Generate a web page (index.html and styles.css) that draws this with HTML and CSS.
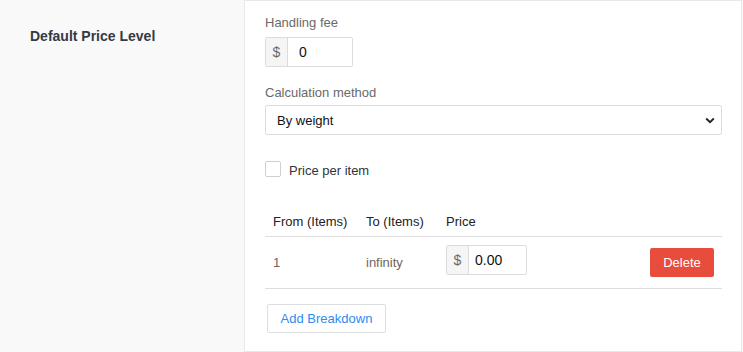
FILE: index.html
```html
<!DOCTYPE html>
<html>
<head>
<meta charset="utf-8">
<link rel="stylesheet" href="styles.css">
</head>
<body>
<div class="layout">
  <div class="side">
    <div class="side-title">Default Price Level</div>
  </div>
  <div class="panel">
    <div class="field">
      <div class="label">Handling fee</div>
      <div class="input-group fee">
        <span class="addon">$</span>
        <span class="value">0</span>
      </div>
    </div>
    <div class="field calc">
      <div class="label">Calculation method</div>
      <div class="select">
        <span>By weight</span>
        <svg class="chev" width="10" height="7" viewBox="0 0 10 7"><path d="M1.2 1.5 L5 5.2 L8.8 1.5" fill="none" stroke="#222" stroke-width="1.8"/></svg>
      </div>
    </div>
    <div class="check-row">
      <span class="checkbox"></span>
      <span class="check-label">Price per item</span>
    </div>
    <table class="tbl">
      <thead>
        <tr>
          <th class="c1">From (Items)</th>
          <th class="c2">To (Items)</th>
          <th class="c3">Price</th>
          <th class="c4"></th>
        </tr>
      </thead>
      <tbody>
        <tr>
          <td class="c1 muted">1</td>
          <td class="c2 muted">infinity</td>
          <td class="c3">
            <div class="input-group price">
              <span class="addon">$</span>
              <span class="value">0.00</span>
            </div>
          </td>
          <td class="c4"><button class="btn-delete">Delete</button></td>
        </tr>
      </tbody>
    </table>
    <button class="btn-add">Add Breakdown</button>
  </div>
</div>
</body>
</html>
```
FILE: styles.css
```css
html, body {
  margin: 0;
  padding: 0;
}
body {
  background: #f9f9f9;
  font-family: "Liberation Sans", Arial, sans-serif;
  font-size: 13px;
  color: #333;
  width: 743px;
  height: 352px;
  overflow: hidden;
}
.layout {
  display: flex;
  height: 352px;
}
.side {
  width: 244px;
  flex: none;
  box-sizing: border-box;
  padding: 27px 0 0 30px;
}
.side-title {
  font-size: 14px;
  font-weight: bold;
  line-height: 18px;
  color: #333a45;
}
.panel {
  width: 498px;
  flex: none;
  box-sizing: border-box;
  height: 352px;
  background: #fff;
  border: 1px solid #e8e8e8;
  padding: 13px 19px 0 20px;
}
.label {
  line-height: 18px;
  color: #6a6a6a;
  margin-bottom: 5px;
}
.calc {
  margin-top: 17px;
}
.calc .label {
  margin-bottom: 3px;
}
.input-group {
  display: flex;
  height: 30px;
  box-sizing: border-box;
  border: 1px solid #dcdcdc;
  border-radius: 2px;
  align-items: stretch;
}
.addon {
  width: 21px;
  flex: none;
  background: #f5f5f5;
  border-right: 1px solid #dcdcdc;
  color: #6a6a6a;
  display: flex;
  align-items: center;
  justify-content: center;
  font-size: 14px;
}
.value {
  display: flex;
  align-items: center;
  color: #111;
  font-size: 14px;
}
.fee {
  width: 88px;
}
.fee .value {
  padding-left: 11px;
}
.price {
  width: 81px;
  margin-bottom: 5px;
}
.price .value {
  padding-left: 6px;
}
.select {
  height: 30px;
  box-sizing: border-box;
  border: 1px solid #dcdcdc;
  border-radius: 2px;
  display: flex;
  align-items: center;
  justify-content: space-between;
  padding: 0 6px 0 11px;
  color: #111;
  font-size: 13px;
}
.chev {
  display: block;
}
.check-row {
  margin-top: 25px;
  display: flex;
  align-items: flex-start;
  height: 18px;
}
.checkbox {
  width: 16px;
  height: 16px;
  margin-top: 1px;
  box-sizing: border-box;
  border: 1px solid #cfcfcf;
  border-radius: 2px;
  background: #fff;
  flex: none;
}
.check-label {
  margin-left: 8px;
  padding-top: 2px;
  line-height: 18px;
  color: #333;
}
.tbl {
  margin-top: 25px;
  width: 457px;
  border-collapse: collapse;
  table-layout: fixed;
}
.tbl th {
  font-weight: normal;
  text-align: left;
  color: #222;
  line-height: 18px;
  padding: 10px 8px 5px;
  border-bottom: 1px solid #dedede;
}
.tbl td {
  padding: 8px;
  line-height: 18px;
  vertical-align: middle;
  border-bottom: 1px solid #dedede;
}
.c1 { width: 77px; }
.c2 { width: 64px; }
.c3 { width: 120px; }
.tbl td.c4 { text-align: right; }
.muted {
  color: #6e655c;
}
.btn-delete {
  height: 29px;
  width: 64px;
  border: none;
  border-radius: 2px;
  background: #e74c3c;
  color: #fff;
  font-family: inherit;
  font-size: 13px;
  padding: 0;
  vertical-align: middle;
}
.btn-add {
  display: block;
  margin: 15px 0 0 2px;
  height: 29px;
  width: 119px;
  padding: 0;
  background: #fff;
  border: 1px solid #dcdee2;
  border-radius: 2px;
  color: #2d8cf0;
  font-family: inherit;
  font-size: 13px;
}
```
